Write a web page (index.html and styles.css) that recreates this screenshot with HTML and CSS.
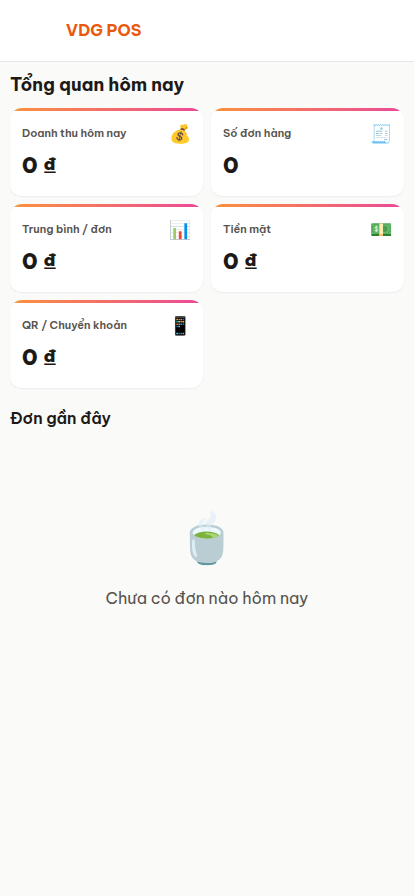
FILE: index.html
```html
<!DOCTYPE html>
<html lang="vi">
<head>
<meta charset="utf-8">
<meta name="viewport" content="width=device-width, initial-scale=1">
<title>VDG POS</title>
<link rel="stylesheet" href="styles.css">
</head>
<body>
<header class="topbar"><span class="brand">VDG POS</span></header>
<main class="page">
  <h1 class="title">Tổng quan hôm nay</h1>
  <section class="stats">
    <article class="card"><h2 class="label">Doanh thu hôm nay</h2><span class="icon">💰</span><p class="value">0 ₫</p></article>
    <article class="card"><h2 class="label">Số đơn hàng</h2><span class="icon">🧾</span><p class="value">0</p></article>
    <article class="card"><h2 class="label">Trung bình / đơn</h2><span class="icon">📊</span><p class="value">0 ₫</p></article>
    <article class="card"><h2 class="label">Tiền mặt</h2><span class="icon">💵</span><p class="value">0 ₫</p></article>
    <article class="card"><h2 class="label">QR / Chuyển khoản</h2><span class="icon">📱</span><p class="value">0 ₫</p></article>
  </section>
  <h2 class="subtitle">Đơn gần đây</h2>
  <section class="empty">
    <div class="empty-icon">🍵</div>
    <p class="empty-text">Chưa có đơn nào hôm nay</p>
  </section>
</main>
</body>
</html>
```
FILE: styles.css
```css
* { box-sizing: border-box; margin: 0; }
body { background: #fafaf9; color: #1c1917; font-family: "Be Vietnam Pro", Inter, sans-serif; font-size: 16px; line-height: 24px; }
.topbar { padding: 18px 66px 19px; background: #fff; border-bottom: 1px solid #e5e7eb; }
.brand { display: block; color: #ea580c; font-weight: 700; }
.page { padding: 10px; }
.title { font-size: 18px; font-weight: 700; line-height: 26px; margin-bottom: 10px; }
.stats { display: grid; grid-template-columns: 1fr 1fr; gap: 8px; }
.card { position: relative; overflow: hidden; display: grid; grid-template-columns: 1fr auto; row-gap: 5px; padding: 14px 12px 17px; background: #fff; border-radius: 12px; box-shadow: 0 1px 2px rgba(0, 0, 0, 0.06); }
.card::before { content: ""; position: absolute; top: 0; left: 0; right: 0; height: 3px; background: linear-gradient(90deg, #fb923c, #ec4899); }
.label { color: #57534e; font-size: 11px; font-weight: 600; line-height: 22px; }
.icon { font-size: 18px; line-height: 24px; }
.value { grid-column: 1 / -1; font-size: 22px; font-weight: 800; line-height: 28px; }
.subtitle { font-size: 16px; font-weight: 600; line-height: 24px; margin-top: 18px; }
.empty { padding: 72px 16px; text-align: center; color: #57534e; }
.empty-icon { font-size: 48px; line-height: 72px; }
.empty-text { margin-top: 12px; }
```
